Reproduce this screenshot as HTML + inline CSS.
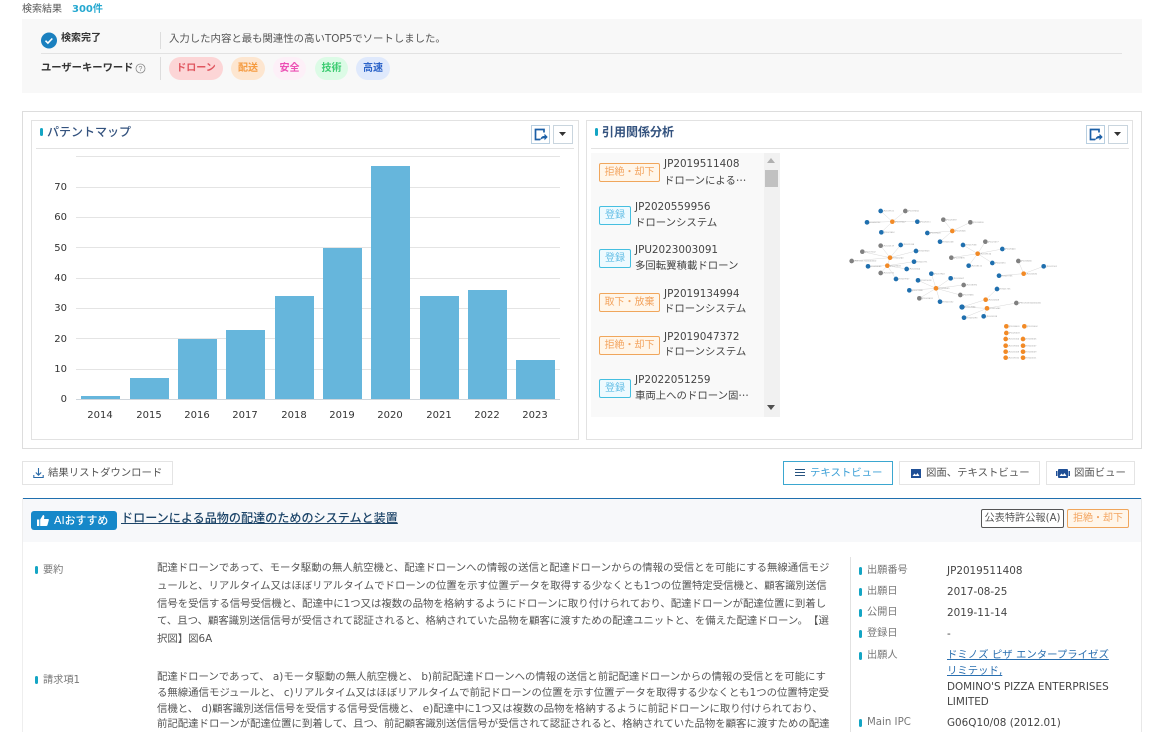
<!DOCTYPE html>
<html lang="ja"><head><meta charset="utf-8"><title>検索結果</title>
<style>
html,body{margin:0;padding:0;background:#fff}
body{width:1167px;height:732px;overflow:hidden;position:relative;font-family:"DejaVu Sans","Noto Sans CJK JP",sans-serif;font-size:10px;color:#444;text-spacing-trim:space-all}
.a{position:absolute;white-space:nowrap}
.box{position:absolute;box-sizing:border-box;border:1px solid #e2e2e2;background:#fff}
.ttl{position:absolute;font-size:12px;color:#33527e;line-height:16px;white-space:nowrap}
.bar{position:absolute;width:3px;background:#14a5c4;border-radius:2px}
.pill{position:absolute;top:57px;height:23px;border-radius:12px;font-size:10px;font-weight:700;line-height:23px;text-align:center}
.tag{position:absolute;box-sizing:border-box;height:19px;font-size:10px;line-height:17px;text-align:center;border-radius:2px;white-space:nowrap}
.or{border:1px solid #f0a65c;background:#fff6ea;color:#f3a45f;left:599px;width:61px}
.bl{border:1px solid #45bfe0;background:#eefaff;color:#63bee6;left:599px;width:32px}
.li{position:absolute;font-size:10.4px;line-height:16px;color:#444;white-space:nowrap}
.bn{position:absolute;box-sizing:border-box;top:461px;height:24px;border:1px solid #e4e4e4;background:#fff;font-size:10.4px;line-height:22px;color:#555;white-space:nowrap}
.tx{position:absolute;left:157px;font-size:10.4px;color:#555;white-space:nowrap;line-height:14px}
.lb{position:absolute;font-size:10.2px;color:#777;white-space:nowrap;line-height:14px}
.vl{position:absolute;left:947px;font-size:10.4px;color:#444;white-space:nowrap;line-height:16px}
.yl{position:absolute;width:24px;left:43px;text-align:right;font-size:10px;color:#333;line-height:12px}
.xl{position:absolute;top:410px;width:48px;text-align:center;font-size:10px;color:#333;line-height:12px}
.g{position:absolute;left:76px;width:484px;height:1px;background:#e4e4e4}
.b{position:absolute;width:39px;background:#66b6dc}
.el{font-family:"Noto Sans CJK JP",sans-serif}
</style></head><body>

<div class="a" style="left:22px;top:3px;font-size:10px;line-height:14px;color:#555">検索結果</div>
<div class="a" style="left:72px;top:3px;font-size:10px;line-height:14px;font-weight:700;color:#25a8d0">300件</div>

<div class="a" style="left:22px;top:19px;width:1120px;height:74px;background:#f8f8f8"></div>
<svg class="a" style="left:41px;top:32px" width="16" height="17" viewBox="0 0 16 16"><circle cx="8" cy="8" r="8" fill="#1a80bf"/><path d="M4.5 8.2l2.4 2.4 4.4-4.6" fill="none" stroke="#fff" stroke-width="1.6"/></svg>
<div class="a" style="left:61px;top:32px;font-size:10px;font-weight:700;line-height:14px;color:#333">検索完了</div>
<div class="a" style="left:160px;top:32px;width:1px;height:17px;background:#ddd"></div>
<div class="a" style="left:169px;top:32px;font-size:10.4px;line-height:15px;color:#555">入力した内容と最も関連性の高いTOP5でソートしました。</div>
<div class="a" style="left:41px;top:53px;width:1081px;height:1px;background:#e2e2e2"></div>
<div class="a" style="left:41px;top:61px;font-size:10.3px;font-weight:700;line-height:15px;color:#333">ユーザーキーワード</div>
<svg class="a" style="left:135px;top:63px" width="11" height="11" viewBox="0 0 11 11"><circle cx="5.5" cy="5.5" r="4.5" fill="none" stroke="#888" stroke-width=".8"/><text x="5.5" y="8" font-size="7" text-anchor="middle" fill="#888" font-family="Liberation Sans">?</text></svg>
<div class="a" style="left:160px;top:57px;width:1px;height:23px;background:#ddd"></div>
<div class="pill" style="left:169px;width:54px;background:#fcd5d6;color:#e0565f">ドローン</div>
<div class="pill" style="left:231px;width:34px;background:#fde6d0;color:#f59a3e">配送</div>
<div class="pill" style="left:273px;width:33px;background:#fdf0f8;color:#ec4fb4">安全</div>
<div class="pill" style="left:315px;width:33px;background:#dcfbe6;color:#3dcc72">技術</div>
<div class="pill" style="left:356px;width:34px;background:#dfe9fc;color:#2a62c8">高速</div>

<div class="box" style="left:22px;top:111px;width:1120px;height:338px;border-color:#ddd"></div>
<div class="box" style="left:31px;top:120px;width:548px;height:320px"></div>
<div class="box" style="left:586px;top:120px;width:547px;height:320px"></div>

<div class="bar" style="left:40px;top:128px;height:8px"></div>
<div class="ttl" style="left:47px;top:124px;font-weight:500">パテントマップ</div>
<div class="a" style="left:36px;top:148px;width:538px;height:1px;background:#e2e2e2"></div>
<div class="bar" style="left:595px;top:128px;height:8px"></div>
<div class="ttl" style="left:602px;top:124px;font-weight:700;font-size:12px">引用関係分析</div>
<div class="a" style="left:591px;top:148px;width:538px;height:1px;background:#e2e2e2"></div>

<!-- icon buttons -->
<div class="box" style="left:531px;top:125px;width:19px;height:19px;border-color:#b9cfe0"></div>
<svg class="a" style="left:534px;top:128px" width="14" height="14" viewBox="0 0 14 14"><path d="M7 1.500H1.500v10H6M7 1.500h3v3" fill="none" stroke="#1b5fa6" stroke-width="1.700"/><path d="M6 12.500c.4-3 2.200-4.600 4.500-4.600V5.800l3.200 3.200-3.200 3.200v-2c-1.900 0-3.400.7-4.500 2.300z" fill="#1b5fa6"/></svg>
<div class="box" style="left:553px;top:125px;width:20px;height:19px;border-color:#c9d5de"></div>
<svg class="a" style="left:559px;top:132px" width="8" height="5"><path d="M0 0h7L3.500 4z" fill="#333"/></svg>
<div class="box" style="left:1086px;top:125px;width:19px;height:19px;border-color:#b9cfe0"></div>
<svg class="a" style="left:1089px;top:128px" width="14" height="14" viewBox="0 0 14 14"><path d="M7 1.500H1.500v10H6M7 1.500h3v3" fill="none" stroke="#1b5fa6" stroke-width="1.700"/><path d="M6 12.500c.4-3 2.200-4.600 4.500-4.600V5.800l3.200 3.200-3.200 3.200v-2c-1.900 0-3.400.7-4.500 2.300z" fill="#1b5fa6"/></svg>
<div class="box" style="left:1108px;top:125px;width:20px;height:19px;border-color:#c9d5de"></div>
<svg class="a" style="left:1114px;top:132px" width="8" height="5"><path d="M0 0h7L3.500 4z" fill="#333"/></svg>

<!-- chart -->
<div class="g" style="top:156px"></div><div class="g" style="top:187px"></div><div class="g" style="top:217px"></div><div class="g" style="top:247px"></div><div class="g" style="top:278px"></div><div class="g" style="top:308px"></div><div class="g" style="top:338px"></div><div class="g" style="top:369px"></div>
<div class="g" style="top:399px;background:#cfd6dc"></div>
<div class="yl" style="top:182px">70</div><div class="yl" style="top:212px">60</div><div class="yl" style="top:243px">50</div><div class="yl" style="top:273px">40</div><div class="yl" style="top:303px">30</div><div class="yl" style="top:334px">20</div><div class="yl" style="top:364px">10</div><div class="yl" style="top:394px">0</div>
<div class="b" style="left:81px;top:396px;height:3px"></div>
<div class="b" style="left:130px;top:378px;height:21px"></div>
<div class="b" style="left:178px;top:339px;height:60px"></div>
<div class="b" style="left:226px;top:330px;height:69px"></div>
<div class="b" style="left:275px;top:296px;height:103px"></div>
<div class="b" style="left:323px;top:248px;height:151px"></div>
<div class="b" style="left:371px;top:166px;height:233px"></div>
<div class="b" style="left:420px;top:296px;height:103px"></div>
<div class="b" style="left:468px;top:290px;height:109px"></div>
<div class="b" style="left:516px;top:360px;height:39px"></div>
<div class="xl" style="left:76px">2014</div><div class="xl" style="left:125px">2015</div><div class="xl" style="left:173px">2016</div><div class="xl" style="left:221px">2017</div><div class="xl" style="left:270px">2018</div><div class="xl" style="left:318px">2019</div><div class="xl" style="left:366px">2020</div><div class="xl" style="left:415px">2021</div><div class="xl" style="left:463px">2022</div><div class="xl" style="left:511px">2023</div>

<!-- citation list -->
<div class="a" style="left:591px;top:153px;width:173px;height:264px;background:#f9f9f9"></div>
<div class="a" style="left:764px;top:153px;width:16px;height:264px;background:#f1f1f1"></div>
<div class="a" style="left:765px;top:170px;width:13px;height:17px;background:#c1c1c1"></div>
<svg class="a" style="left:767px;top:158px" width="9" height="6"><path d="M0 5h8L4 0z" fill="#b0b0b0"/></svg>
<svg class="a" style="left:767px;top:405px" width="9" height="6"><path d="M0 0h8L4 5z" fill="#505050"/></svg>

<div class="tag or" style="top:163px">拒絶・却下</div>
<div class="li" style="left:664px;top:156px">JP2019511408</div><div class="li" style="left:664px;top:172px">ドローンによる<span class="el">…</span></div>
<div class="tag bl" style="top:206px">登録</div>
<div class="li" style="left:635px;top:199px">JP2020559956</div><div class="li" style="left:635px;top:215px">ドローンシステム</div>
<div class="tag bl" style="top:249px">登録</div>
<div class="li" style="left:635px;top:242px">JPU2023003091</div><div class="li" style="left:635px;top:258px">多回転翼積載ドローン</div>
<div class="tag or" style="top:293px">取下・放棄</div>
<div class="li" style="left:664px;top:286px">JP2019134994</div><div class="li" style="left:664px;top:301px">ドローンシステム</div>
<div class="tag or" style="top:336px">拒絶・却下</div>
<div class="li" style="left:664px;top:329px">JP2019047372</div><div class="li" style="left:664px;top:344px">ドローンシステム</div>
<div class="tag bl" style="top:379px">登録</div>
<div class="li" style="left:635px;top:372px">JP2022051259</div><div class="li" style="left:635px;top:387px">車両上へのドローン固<span class="el">…</span></div>

<!-- graph -->
<svg class="a" style="left:830px;top:190px;filter:blur(.35px)" width="240" height="180" viewBox="0 0 720 540">
<g stroke="#d8d8d8" stroke-width="1.500" fill="none">
<path d="M187 95L152 63M187 95L226 63M187 95L111 97M187 95L262 95M187 95L154 127"/>
<path d="M367 123L340 89M367 123L421 97M367 123L292 129M367 123L330 155"/>
<path d="M443 191L399 165M443 191L466 155M443 191L517 177M443 191L364 203M443 191L416 227M443 191L487 219"/>
<path d="M180 203L152 167M180 203L212 165M180 203L97 185M180 203L258 183M180 203L65 213M172 227L114 229M172 227L252 215M172 227L230 237M172 227L152 249M172 227L198 267M180 203L172 227"/>
<path d="M581 251L565 213M581 251L641 229M581 251L507 257"/>
<path d="M318 295L304 251M318 295L264 271M318 295L362 265M318 295L238 301M318 295L401 285M318 295L268 325M318 295L391 315M318 295L330 335"/>
<path d="M467 329L501 297M467 329L396 351M471 355L396 351M471 355L559 339M471 355L402 383M471 355L461 379"/>
</g>
<g fill="#1f6fae">
<circle cx="152" cy="63" r="7"/><circle cx="111" cy="97" r="7"/><circle cx="262" cy="95" r="7"/><circle cx="154" cy="127" r="7"/><circle cx="292" cy="129" r="7"/><circle cx="330" cy="155" r="7"/><circle cx="399" cy="165" r="7"/><circle cx="517" cy="177" r="7"/><circle cx="416" cy="227" r="7"/><circle cx="487" cy="219" r="7"/><circle cx="212" cy="165" r="7"/><circle cx="258" cy="183" r="7"/><circle cx="114" cy="229" r="7"/><circle cx="252" cy="215" r="7"/><circle cx="230" cy="237" r="7"/><circle cx="198" cy="267" r="7"/><circle cx="641" cy="229" r="7"/><circle cx="507" cy="257" r="7"/><circle cx="304" cy="251" r="7"/><circle cx="264" cy="271" r="7"/><circle cx="362" cy="265" r="7"/><circle cx="238" cy="301" r="7"/><circle cx="330" cy="335" r="7"/><circle cx="501" cy="297" r="7"/><circle cx="396" cy="351" r="8"/><circle cx="402" cy="383" r="7"/><circle cx="461" cy="379" r="7"/>
</g>
<g fill="#808080">
<circle cx="226" cy="63" r="7"/><circle cx="340" cy="89" r="7"/><circle cx="421" cy="97" r="7"/><circle cx="466" cy="155" r="7"/><circle cx="364" cy="203" r="7"/><circle cx="152" cy="167" r="7"/><circle cx="97" cy="185" r="7"/><circle cx="65" cy="213" r="7"/><circle cx="152" cy="249" r="7"/><circle cx="565" cy="213" r="7"/><circle cx="401" cy="285" r="7"/><circle cx="268" cy="325" r="7"/><circle cx="391" cy="315" r="7"/><circle cx="559" cy="339" r="7"/>
</g>
<g fill="#f28a26">
<circle cx="187" cy="95" r="7"/><circle cx="367" cy="123" r="7"/><circle cx="443" cy="191" r="7"/><circle cx="180" cy="203" r="7"/><circle cx="172" cy="227" r="7"/><circle cx="581" cy="251" r="7"/><circle cx="318" cy="295" r="7"/><circle cx="467" cy="329" r="7"/><circle cx="471" cy="355" r="7"/>
<circle cx="529" cy="409" r="7"/><circle cx="583" cy="409" r="7"/><circle cx="529" cy="429" r="7"/><circle cx="527" cy="447" r="7"/><circle cx="579" cy="447" r="7"/><circle cx="527" cy="467" r="7"/><circle cx="579" cy="467" r="7"/><circle cx="527" cy="485" r="7"/><circle cx="579" cy="485" r="7"/><circle cx="527" cy="503" r="7"/><circle cx="579" cy="503" r="7"/>
</g>
<g fill="#999" font-size="6" font-family="DejaVu Sans">
<text x="160" y="65">JP2019511</text><text x="234" y="65">JP2019034</text><text x="119" y="99">JP2018722</text><text x="270" y="97">JP2020111</text><text x="162" y="129">JP2021452</text><text x="195" y="97">JP2019047</text>
<text x="348" y="91">JP2020559</text><text x="429" y="99">JP2018930</text><text x="300" y="131">JP2019220</text><text x="338" y="157">JP2021008</text><text x="375" y="125">JP2020345</text>
<text x="407" y="167">JP2017558</text><text x="474" y="157">JP2021077</text><text x="525" y="179">JP2020441</text><text x="372" y="205">JP2019876</text><text x="424" y="229">JP2018112</text><text x="495" y="221">JP2022051</text><text x="451" y="193">JP2019134</text>
<text x="160" y="169">JP2020119</text><text x="220" y="165">JP2021338</text><text x="105" y="187">JP2017102</text><text x="266" y="185">JP2019823</text><text x="73" y="215">JPWO2017100000000</text><text x="122" y="231">JP2018045</text><text x="260" y="217">JP2020771</text><text x="238" y="239">JP2021664</text><text x="160" y="251">JP2022190</text><text x="206" y="269">JP2019907</text><text x="188" y="205">JP2020240</text><text x="180" y="229">JP2023003</text>
<text x="573" y="215">JP2018266</text><text x="649" y="231">JP2021901</text><text x="515" y="259">JP2019755</text><text x="589" y="253">JP2020630</text>
<text x="312" y="253">JP2017943</text><text x="272" y="273">JP2019018</text><text x="370" y="267">JP2020567</text><text x="246" y="303">JP2021286</text><text x="409" y="287">JP2018390</text><text x="276" y="327">JP2022474</text><text x="399" y="317">JP2019681</text><text x="338" y="337">JP2020152</text><text x="326" y="297">JP2018509</text>
<text x="509" y="299">JP2021735</text><text x="404" y="353">JP2017864</text><text x="410" y="385">JP2019293</text><text x="469" y="381">JP2020918</text><text x="567" y="341">JPWO2018100000000</text><text x="475" y="331">JP2022608</text><text x="479" y="357">JP2019442</text>
<text x="537" y="411">JP2018001</text><text x="591" y="411">JP2019002</text><text x="537" y="431">JP2020003</text><text x="535" y="449">JP2021004</text><text x="587" y="449">JP2018005</text><text x="535" y="469">JP2019006</text><text x="587" y="469">JP2020007</text><text x="535" y="487">JP2021008</text><text x="587" y="487">JP2018009</text><text x="535" y="505">JP2019010</text><text x="587" y="505">JP2020011</text>
</g>
</svg>

<!-- toolbar -->
<div class="bn" style="left:22px;width:151px;padding-left:25px">結果リストダウンロード</div>
<svg class="a" style="left:33px;top:467px" width="11" height="12" viewBox="0 0 11 12"><path d="M5.500 1v7M2.800 5.500l2.700 2.700 2.700-2.700M.8 8v2.500h9.400V8" fill="none" stroke="#2a6aa8" stroke-width="1.100"/></svg>
<div class="bn" style="left:783px;width:110px;padding-left:26px;border-color:#3ba7d0;color:#3b9fd6">テキストビュー</div>
<svg class="a" style="left:795px;top:469px" width="11" height="8"><path d="M0 .5h10M0 3.500h10M0 6.500h10" stroke="#26527f" stroke-width="1"/></svg>
<div class="bn" style="left:899px;width:141px;padding-left:26px">図面、テキストビュー</div>
<svg class="a" style="left:911px;top:469px" width="10" height="9" viewBox="0 0 10 9"><path d="M0 0h10v9H0z" fill="#1f4f96"/><path d="M1.500 7l2-2.500 1.500 1.500 1.500-2 2 3z" fill="#fff"/></svg>
<div class="bn" style="left:1046px;width:89px;padding-left:27px">図面ビュー</div>
<svg class="a" style="left:1056px;top:469px" width="14" height="9" viewBox="0 0 14 9"><rect x="2" y="0" width="10" height="9" rx="1" fill="#1f4f96"/><rect x="0" y="2" width="1.500" height="5" fill="#1f4f96"/><rect x="12.500" y="2" width="1.500" height="5" fill="#1f4f96"/><path d="M3.500 7l2-2.500 1.500 1.500 1.500-2 2 3z" fill="#fff"/></svg>

<!-- result card -->
<div class="a" style="left:22px;top:498px;width:1120px;height:44px;background:#f7f8fa"></div>
<div class="a" style="left:22px;top:498px;width:1120px;height:1px;background:#1f6fae"></div>
<div class="a" style="left:1141px;top:498px;width:1px;height:234px;background:#e8e8e8"></div>
<div class="a" style="left:22px;top:498px;width:1px;height:234px;background:#eee"></div>
<div class="a" style="left:31px;top:511px;width:86px;height:19px;background:#1688c9;border-radius:3px"></div>
<svg class="a" style="left:37px;top:515px" width="12" height="11" viewBox="0 0 12 11"><path d="M0 4.500h2.300V11H0zM3.200 4.500L6 0c1.200 0 1.500 1 1.300 2L7 4h4c.8 0 1 .7.800 1.300L10.500 10c-.2.600-.6 1-1.200 1H3.200z" fill="#fff"/></svg>
<div class="a" style="left:54px;top:513px;font-size:10.9px;line-height:15px;font-weight:500;color:#fff">AIおすすめ</div>
<div class="a" style="left:121px;top:510px;font-size:12.1px;line-height:17px;font-weight:500;color:#1c4468;text-decoration:underline">ドローンによる品物の配達のためのシステムと装置</div>
<div class="tag" style="left:981px;top:509px;width:83px;border:1px solid #555;color:#555;background:#fff;font-size:10.2px">公表特許公報(A)</div>
<div class="tag" style="left:1067px;top:509px;width:62px;border:1px solid #f0a65c;color:#f3a45f;background:#fff6ea">拒絶・却下</div>

<div class="bar" style="left:35px;top:566px;height:8px"></div>
<div class="lb" style="left:43px;top:564px">要約</div>
<div class="bar" style="left:35px;top:676px;height:8px"></div>
<div class="lb" style="left:43px;top:674px">請求項1</div>

<div class="tx" style="top:561px">配達ドローンであって、モータ駆動の無人航空機と、配達ドローンへの情報の送信と配達ドローンからの情報の受信とを可能にする無線通信モジ</div>
<div class="tx" style="top:579px">ュールと、リアルタイム又はほぼリアルタイムでドローンの位置を示す位置データを取得する少なくとも1つの位置特定受信機と、顧客識別送信</div>
<div class="tx" style="top:597px">信号を受信する信号受信機と、配達中に1つ又は複数の品物を格納するようにドローンに取り付けられており、配達ドローンが配達位置に到着し</div>
<div class="tx" style="top:614px">て、且つ、顧客識別送信信号が受信されて認証されると、格納されていた品物を顧客に渡すための配達ユニットと、を備えた配達ドローン。【選</div>
<div class="tx" style="top:632px">択図】図6A</div>
<div class="tx" style="top:670px">配達ドローンであって、 a)モータ駆動の無人航空機と、 b)前記配達ドローンへの情報の送信と前記配達ドローンからの情報の受信とを可能にす</div>
<div class="tx" style="top:686px">る無線通信モジュールと、 c)リアルタイム又はほぼリアルタイムで前記ドローンの位置を示す位置データを取得する少なくとも1つの位置特定受</div>
<div class="tx" style="top:702px">信機と、 d)顧客識別送信信号を受信する信号受信機と、 e)配達中に1つ又は複数の品物を格納するように前記ドローンに取り付けられており、</div>
<div class="tx" style="top:717px">前記配達ドローンが配達位置に到着して、且つ、前記顧客識別送信信号が受信されて認証されると、格納されていた品物を顧客に渡すための配達</div>

<div class="a" style="left:850px;top:557px;width:1px;height:175px;background:#e2e2e2"></div>
<div class="bar" style="left:859px;top:567px;height:8px"></div><div class="lb" style="left:867px;top:564px">出願番号</div><div class="vl" style="top:563px">JP2019511408</div>
<div class="bar" style="left:859px;top:588px;height:8px"></div><div class="lb" style="left:867px;top:585px">出願日</div><div class="vl" style="top:584px">2017-08-25</div>
<div class="bar" style="left:859px;top:609px;height:8px"></div><div class="lb" style="left:867px;top:606px">公開日</div><div class="vl" style="top:605px">2019-11-14</div>
<div class="bar" style="left:859px;top:630px;height:8px"></div><div class="lb" style="left:867px;top:627px">登録日</div><div class="vl" style="top:626px">-</div>
<div class="bar" style="left:859px;top:652px;height:8px"></div><div class="lb" style="left:867px;top:649px">出願人</div>
<div class="vl" style="top:647px;color:#2a6fb0;text-decoration:underline">ドミノズ ピザ エンタープライゼズ</div>
<div class="vl" style="top:663px;color:#2a6fb0;text-decoration:underline">リミテッド,</div>
<div class="vl" style="top:679px">DOMINO'S PIZZA ENTERPRISES</div>
<div class="vl" style="top:694px">LIMITED</div>
<div class="bar" style="left:859px;top:719px;height:8px"></div><div class="lb" style="left:867px;top:716px">Main IPC</div><div class="vl" style="top:715px">G06Q10/08 (2012.01)</div>

</body></html>
